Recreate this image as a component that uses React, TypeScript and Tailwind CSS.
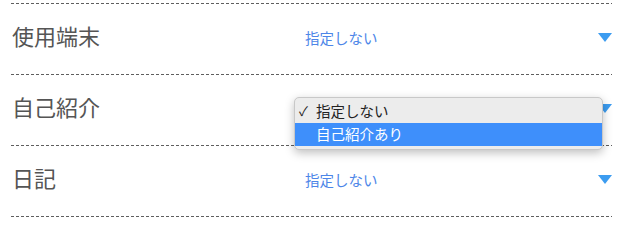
import React from "react";

const Dash = () => (
  <div className="h-px w-full bg-[repeating-linear-gradient(to_right,#5e5e5e_0_3px,transparent_3px_5px)]" />
);

const Tri = () => (
  <svg width="14" height="9" viewBox="0 0 14 9" className="block">
    <polygon points="0,0 14,0 7,9" fill="#3c9cf0" />
  </svg>
);

function Row({ label, hideValue, children }: { label: string; hideValue?: boolean; children?: React.ReactNode }) {
  return (
    <div className="relative flex h-[70px] items-center">
      <div className="mb-[8px] w-[294px] pl-px text-[22px] leading-none text-[#555555]">{label}</div>
      <div className="flex flex-1 items-center">
        <span className={"mb-[2px] text-[14.5px] text-[#4d86e8] " + (hideValue ? "invisible" : "")}>指定しない</span>
        <span className="ml-auto mb-[4px]">
          <Tri />
        </span>
      </div>
      {children}
    </div>
  );
}

export default function App() {
  return (
    <div
      className="h-[225px] w-[619px] bg-white pl-[11px] pr-[7px] pt-[3px]"
      style={{ fontFamily: '"Noto Sans CJK JP", "Noto Sans", sans-serif' }}
    >
      <Dash />
      <Row label="使用端末" />
      <Dash />
      <Row label="自己紹介" hideValue>
        <div className="absolute left-[283px] top-[22px] z-10 w-[309px] rounded-[5px] border border-[#c8c8c8] bg-[#ececec] pt-[2px] pb-[3px] text-[14.5px] shadow-[0_3px_10px_rgba(0,0,0,0.25)]">
          <div className="flex h-[23px] items-center pb-[2px] text-[#222]">
            <span className="w-[21px] pl-[4px] text-[13px]">✓</span>
            <span>指定しない</span>
          </div>
          <div className="flex h-[23px] items-center bg-[#3e8ffb] pb-[2px] text-white">
            <span className="w-[21px]" />
            <span>自己紹介あり</span>
          </div>
        </div>
      </Row>
      <Dash />
      <Row label="日記" />
      <Dash />
    </div>
  );
}
